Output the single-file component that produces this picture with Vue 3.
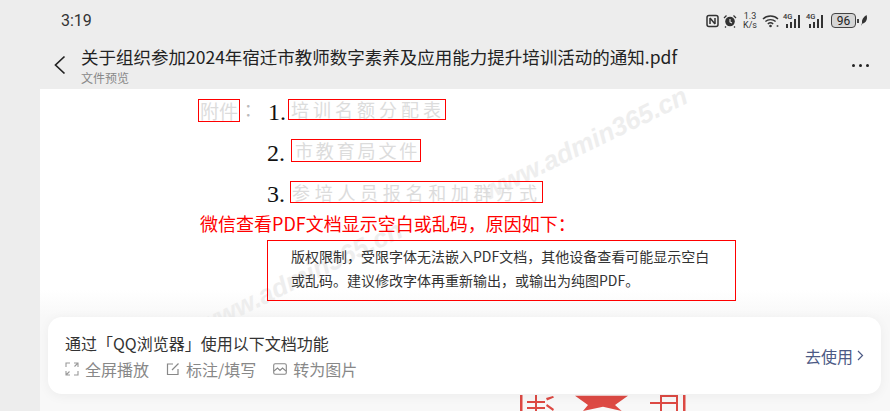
<script setup>
const attachments = [
  { no: '1.', name: '培训名额分配表', indent: 'a' },
  { no: '2.', name: '市教育局文件', indent: 'b' },
  { no: '3.', name: '参培人员报名和加群方式', indent: 'c' },
]
</script>

<template>
  <div class="screen">
    <div class="statusbar">
      <span class="time">3:19</span>
      <div class="status-icons">
        <svg width="13" height="14" viewBox="0 0 13 14" class="ico"><rect x="1" y="1.500" width="11" height="11" rx="2" fill="none" stroke="#333" stroke-width="1.500"/><path d="M4 4v6M9 4v6M4 4l5 6" fill="none" stroke="#333" stroke-width="1.500"/></svg>
        <svg width="14" height="14" viewBox="0 0 14 14" class="ico"><circle cx="7" cy="7.500" r="4.800" fill="#333"/><path d="M7 5v3l2 1" stroke="#ededed" stroke-width="1.100" fill="none"/><path d="M1 4l2.500-2.500M13 4l-2.500-2.500M3 12.500l-1 1M11 12.500l1 1" stroke="#333" stroke-width="1.300"/></svg>
        <span class="speed">1.3<br />K/s</span>
        <svg width="18" height="14" viewBox="0 0 18 14" class="ico wifi"><path d="M1 5c4-4 11-4 15 0M3.400 7.600c2.700-2.600 7.500-2.600 10.200 0M5.800 10c1.500-1.300 3.900-1.300 5.400 0" fill="none" stroke="#333" stroke-width="1.400"/><circle cx="8.500" cy="12" r="1.300" fill="#333"/><circle cx="15.500" cy="12" r="1" fill="#555"/></svg>
        <div class="signal">
          <span class="g4">4G</span>
          <svg width="20" height="14" viewBox="0 0 20 14"><path d="M4 10v4M8 8v6M12 5v9M16 1v13" stroke="#333" stroke-width="2"/></svg>
        </div>
        <div class="signal">
          <span class="g4">4G</span>
          <svg width="20" height="14" viewBox="0 0 20 14"><path d="M4 10v4M8 8v6M12 5v9M16 1v13" stroke="#333" stroke-width="2"/></svg>
        </div>
        <div class="battery"><span>96</span></div>
        <i class="batt-tip"></i>
        <svg width="7" height="11" viewBox="0 0 7 11"><path d="M5.500 0C2 2 .5 5 1 8L0 11l1.500-2.500C5 8 7 4 5.500 0z" fill="#333"/></svg>
      </div>
    </div>

    <header class="topbar">
      <svg class="back" width="14" height="20" viewBox="0 0 14 20"><path d="M11.500 1.500L2.500 10l9 8.500" fill="none" stroke="#222" stroke-width="1.700"/></svg>
      <div class="titles">
        <div class="title">关于组织参加2024年宿迁市教师数字素养及应用能力提升培训活动的通知.pdf</div>
        <div class="subtitle">文件预览</div>
      </div>
      <div class="more"><i></i><i></i><i></i></div>
    </header>

    <main class="doc">
      <div class="watermark w1">www.admin365.cn</div>
      <div class="watermark w2">www.admin365.cn</div>

      <div class="attach">
        <div class="attach-label"><span class="garbled box">附件</span><span class="colon">：</span></div>
        <div class="attach-list">
          <div v-for="a in attachments" :key="a.no" class="attach-row" :class="a.indent">
            <span class="no">{{ a.no }}</span>
            <span class="garbled box">{{ a.name }}</span>
          </div>
        </div>
      </div>

      <div class="warn">微信查看PDF文档显示空白或乱码，原因如下：</div>
      <div class="reason">
        版权限制，受限字体无法嵌入PDF文档，其他设备查看可能显示空白或乱码。建议修改字体再重新输出，或输出为纯图PDF。
      </div>

      <svg class="stamp" width="170" height="17" viewBox="0 0 170 17">
        <g fill="#dd4a44">
          <rect x="0" y="1" width="2.500" height="16"/>
          <rect x="7" y="7" width="18" height="2"/>
          <rect x="7" y="13" width="18" height="2"/>
          <rect x="15" y="1" width="2" height="16"/>
          <path d="M26 4l7-2 1 1.500-7 3zM27 10l7 5-1 2-7-5z"/>
          <path d="M55 1.700h53L95 11l6.700 6L83 12.700 63 17l5-6z"/>
          <rect x="130" y="8" width="28" height="2"/>
          <rect x="140" y="1" width="2" height="16"/>
          <rect x="156" y="1" width="2" height="16"/>
          <rect x="140" y="1" width="18" height="2"/>
          <rect x="163" y="1" width="2.500" height="16"/>
        </g>
      </svg>

      <div class="promo">
        <div class="promo-left">
          <div class="promo-title">通过「QQ浏览器」使用以下文档功能</div>
          <div class="promo-tools">
            <span class="tool">
              <svg width="14" height="14" viewBox="0 0 14 14"><path d="M1 5V1h4M9 1h4v4M13 9v4H9M5 13H1V9M1.500 12.500l3-3M12.500 1.500l-3 3" fill="none" stroke="#999" stroke-width="1.100"/></svg>
              全屏播放
            </span>
            <span class="tool">
              <svg width="14" height="14" viewBox="0 0 14 14"><path d="M7 2H1.500v10.500H12V7M6 8l6.500-6.500" fill="none" stroke="#888" stroke-width="1.200"/></svg>
              标注/填写
            </span>
            <span class="tool">
              <svg width="14" height="14" viewBox="0 0 14 14"><rect x="0.700" y="1.700" width="12.600" height="10.600" rx="1.500" fill="none" stroke="#888" stroke-width="1.100"/><path d="M1 9l3.500-3L7 8.500 9.500 6 13 9" fill="none" stroke="#888" stroke-width="1.100"/></svg>
              转为图片
            </span>
          </div>
        </div>
        <div class="promo-go">
          去使用
          <svg width="7" height="11" viewBox="0 0 7 11"><path d="M1 1l4.500 4.500L1 10" fill="none" stroke="#4c5a85" stroke-width="1.200"/></svg>
        </div>
      </div>
    </main>
  </div>
</template>

<style>
html, body {
  margin: 0;
  background: #ededed;
}
</style>

<style scoped>
.screen {
  width: 890px;
  height: 411px;
  overflow: hidden;
  display: flex;
  flex-direction: column;
  background: #ededed;
  font-family: "Noto Sans CJK SC", "Noto Sans", sans-serif;
  color: #222;
}

.statusbar {
  height: 41px;
  flex: none;
  display: flex;
  justify-content: space-between;
  align-items: center;
  padding: 0 22px 0 61px;
  box-sizing: border-box;
}

.time {
  font-family: Roboto, sans-serif;
  font-size: 16px;
  color: #333;
}

.status-icons {
  display: flex;
  align-items: center;
}

.ico {
  margin-right: 4px;
}

.speed {
  font-family: Roboto, sans-serif;
  font-size: 9px;
  line-height: 9px;
  text-align: center;
  color: #333;
  margin: 0 5px 0 2px;
}

.wifi {
  margin-right: 3px;
}

.signal {
  position: relative;
  width: 20px;
  height: 14px;
  margin-right: 3px;
}

.g4 {
  position: absolute;
  left: 0;
  top: -1px;
  font-family: Roboto, sans-serif;
  font-size: 7.500px;
  font-weight: 500;
  line-height: 8px;
  color: #333;
}

.signal svg {
  position: absolute;
  left: 0;
  top: 0;
}

.battery {
  width: 23px;
  height: 13px;
  border: 1px solid #444;
  border-radius: 4px;
  background: #d6d6d6;
  display: flex;
  align-items: center;
  justify-content: center;
  margin-left: 2px;
}

.battery span {
  font-family: Roboto, sans-serif;
  font-size: 12px;
  color: #222;
}

.batt-tip {
  width: 2px;
  height: 4px;
  background: #444;
  margin: 0 2px 0 1px;
}

.topbar {
  height: 48px;
  flex: none;
  display: flex;
  align-items: flex-start;
  position: relative;
  padding-left: 53px;
}

.back {
  margin: 14px 14px 0 0;
}

.titles {
  padding-top: 3px;
}

.title {
  font-size: 17.500px;
  line-height: 26px;
  color: #222;
  white-space: nowrap;
}

.subtitle {
  font-size: 12px;
  line-height: 16px;
  color: #888;
}

.more {
  position: absolute;
  right: 21px;
  top: 23px;
  display: flex;
  gap: 4px;
}

.more i {
  width: 3px;
  height: 3px;
  border-radius: 50%;
  background: #222;
}

.doc {
  position: relative;
  flex: 1;
  margin-left: 40px;
  overflow: hidden;
  background: linear-gradient(#fff 201px, #f8f8f8 228px);
  padding-top: 10px;
  font-family: "Liberation Serif", "Noto Sans CJK SC", serif;
}

.watermark {
  position: absolute;
  font-family: "Liberation Sans", sans-serif;
  font-size: 26px;
  line-height: 28px;
  font-style: italic;
  font-weight: 700;
  color: #eeeeee;
  transform: rotate(-26deg);
  transform-origin: left bottom;
  white-space: nowrap;
}

.w1 {
  left: 450px;
  top: 88px;
}

.w2 {
  left: 165px;
  top: 222px;
}

.attach {
  display: flex;
  padding-left: 158px;
  position: relative;
}

.attach-label {
  display: flex;
  align-items: flex-start;
  width: 70px;
}

.box {
  border: 1px solid #f00;
}

.garbled {
  font-family: "Noto Sans CJK SC", sans-serif;
  font-size: 18px;
  line-height: 20px;
  color: #dcdcdc;
  white-space: nowrap;
}

.attach-label .garbled {
  font-size: 19px;
  line-height: 21px;
  padding: 0 1px;
}

.colon {
  font-size: 17px;
  color: #bbb;
  margin-left: 4px;
  line-height: 24px;
}

.attach-list {
  display: flex;
  flex-direction: column;
  gap: 19px;
}

.attach-row {
  display: flex;
  align-items: flex-start;
  height: 22px;
}

.no {
  font-size: 24px;
  line-height: 26px;
  color: #111;
}

.a .no {
  width: 20px;
}

.a .garbled {
  line-height: 19px;
  letter-spacing: 4px;
  padding-left: 2px;
}

.b .no {
  margin-left: -1px;
  width: 24px;
}

.b .garbled {
  margin-top: -1px;
  line-height: 21px;
  letter-spacing: 2.850px;
  padding-left: 3px;
}

.c .no {
  margin-left: -1px;
  width: 23px;
}

.c .garbled {
  letter-spacing: 4.700px;
  padding-left: 1px;
}

.warn {
  position: relative;
  margin: 8px 0 0 160px;
  font-family: "Noto Sans CJK SC", sans-serif;
  font-size: 18px;
  line-height: 24px;
  color: #f00;
  white-space: nowrap;
}

.reason {
  position: relative;
  margin: 5px 0 0 227px;
  width: 469px;
  height: 61px;
  box-sizing: border-box;
  border: 1px solid #f00;
  padding: 3px 24px 0 23px;
  font-family: "Noto Sans CJK SC", sans-serif;
  font-size: 14px;
  line-height: 24px;
  color: #333;
}

.stamp {
  position: absolute;
  left: 480px;
  bottom: 0;
}

.promo {
  position: absolute;
  left: 8px;
  right: 9px;
  top: 228px;
  height: 77px;
  background: #fff;
  border-radius: 14px;
  box-shadow: 0 2px 12px rgba(0, 0, 0, 0.05);
  display: flex;
  justify-content: space-between;
  align-items: center;
  padding: 0 17px;
  box-sizing: border-box;
  font-family: "Noto Sans CJK SC", sans-serif;
}

.promo-title {
  font-size: 16px;
  line-height: 22px;
  color: #333;
}

.promo-tools {
  display: flex;
  gap: 17px;
  margin-top: 5px;
}

.tool {
  display: flex;
  align-items: center;
  gap: 6px;
  font-size: 16px;
  line-height: 20px;
  color: #888;
}

.promo-go {
  display: flex;
  align-items: center;
  gap: 4px;
  font-size: 16px;
  color: #4c5a85;
}
</style>
